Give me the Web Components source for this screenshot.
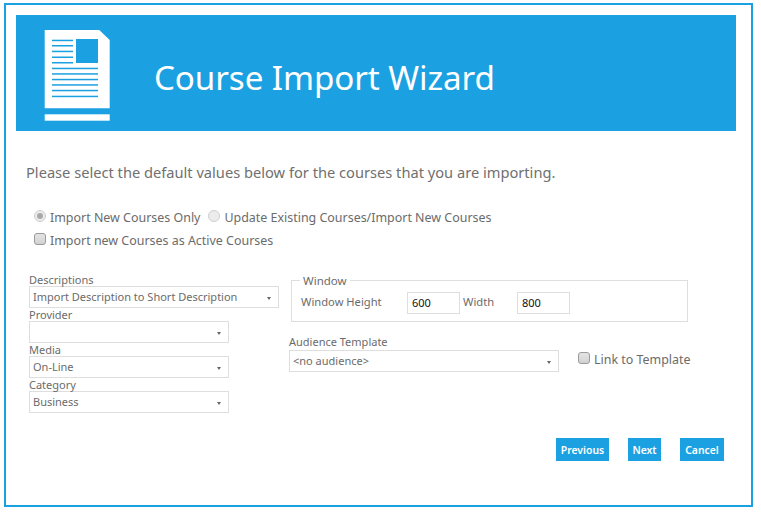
<!DOCTYPE html>
<html>
<head>
<meta charset="utf-8">
<title>Course Import Wizard</title>
<style>
  html, body { margin: 0; background: #fff; }
  body { font-family: "Noto Sans", "Open Sans", sans-serif; color: #6b6b6b; }
</style>
</head>
<body>
<course-wizard>Course Import Wizard</course-wizard>

<script>
class WizBanner extends HTMLElement {
  connectedCallback() {
    this.attachShadow({ mode: 'open' });
    this.shadowRoot.innerHTML = `
      <style>
        :host { display: flex; align-items: center; height: 116px; background: #1ba1e2; color: #fff; }
        svg { display: block; align-self: flex-start; margin: 15px 0 0 28px; flex: none; }
        h1 { margin: 10px 0 0 43px; font: 400 33.2px/40px "Noto Sans", sans-serif; letter-spacing: -0.1px; }
      </style>
      <svg width="67" height="91" viewBox="0 0 67 91">
        <path fill="#fff" d="M0.7 0H55.3L65.7 10V78.3H0.7Z"/>
        <rect x="0.7" y="84.3" width="65" height="6.4" fill="#fff"/>
        <rect x="32" y="9" width="22" height="24" fill="#1ba1e2"/>
        <g fill="#1ba1e2">
          <rect x="8" y="9.7" width="21" height="1.5"/>
          <rect x="8" y="15" width="21" height="1.5"/>
          <rect x="8" y="20.7" width="21" height="1.5"/>
          <rect x="8" y="26.5" width="21" height="1.5"/>
          <rect x="8" y="32" width="21" height="1.5"/>
          <rect x="8" y="37.7" width="46" height="1.5"/>
          <rect x="8" y="43.2" width="46" height="1.5"/>
          <rect x="8" y="48.8" width="46" height="1.5"/>
          <rect x="8" y="54.2" width="46" height="1.5"/>
          <rect x="8" y="59.8" width="46" height="1.5"/>
          <rect x="8" y="65.7" width="46" height="1.5"/>
        </g>
      </svg>
      <h1><slot></slot></h1>
    `;
  }
}
customElements.define('wiz-banner', WizBanner);

class WizOption extends HTMLElement {
  connectedCallback() {
    this.attachShadow({ mode: 'open' });
    const radio = this.getAttribute('type') === 'radio';
    const on = this.hasAttribute('checked');
    this.shadowRoot.innerHTML = `
      <style>
        :host { display: inline-flex; align-items: center; font-size: 12.45px; line-height: 18px; color: #6b6b6b; }
        i { flex: none; box-sizing: border-box; width: 12px; height: 12px; margin: -5px 4px 0 0; border: 1px solid #9a9a9a; border-radius: 3px; background: linear-gradient(#e4e4e4, #d2d2d2); }
        i.radio { border-radius: 50%; border-color: #cfcfcf; background: #ececec; display: flex; align-items: center; justify-content: center; }
        i.radio b { width: 6px; height: 6px; border-radius: 50%; background: #a8a8a8; }
      </style>
      <i class="${radio ? 'radio' : ''}">${radio && on ? '<b></b>' : ''}</i><span><slot></slot></span>
    `;
  }
}
customElements.define('wiz-option', WizOption);

class WizSelect extends HTMLElement {
  connectedCallback() {
    this.attachShadow({ mode: 'open' });
    const label = this.getAttribute('label');
    const width = this.getAttribute('width') || 200;
    this.shadowRoot.innerHTML = `
      <style>
        :host { display: block; font-size: 11px; color: #6b6b6b; }
        label { display: block; height: var(--label-height, 13px); line-height: 13px; }
        div { box-sizing: border-box; width: ${width}px; height: 22px; border: 1px solid #dedede; background: #fff; display: flex; align-items: center; justify-content: space-between; padding: 0 7px 0 3px; line-height: 20px; }
        u { width: 0; height: 0; border: 2.5px solid transparent; border-top: 3px solid #666; border-bottom: 0; margin-top: 2px; }
      </style>
      <label>${label}</label>
      <div><span><slot></slot></span><u></u></div>
    `;
  }
}
customElements.define('wiz-select', WizSelect);

class WizNumber extends HTMLElement {
  connectedCallback() {
    this.attachShadow({ mode: 'open' });
    this.shadowRoot.innerHTML = `
      <style>
        :host { display: block; box-sizing: border-box; width: 53px; height: 22px; border: 1px solid #dedede; padding: 1px 0 0 4px; font-size: 11px; line-height: 18px; color: #111; }
      </style>
      <slot></slot>
    `;
  }
}
customElements.define('wiz-number', WizNumber);

class WizWindowBox extends HTMLElement {
  connectedCallback() {
    this.attachShadow({ mode: 'open' });
    this.shadowRoot.innerHTML = `
      <style>
        :host { display: block; box-sizing: border-box; width: 397px; height: 42px; margin-left: 2px; border: 1px solid #dedede; position: relative; font-size: 11.2px; color: #6b6b6b; }
        .legend { position: absolute; left: 8px; top: -8px; padding: 0 3px; background: #fff; font-size: 11.5px; line-height: 15px; }
        .row { display: flex; align-items: flex-start; padding: 11px 0 0 9px; line-height: 16px; }
        .h { width: 106px; padding-top: 2px; }
        .w { width: 54px; margin-left: 3px; padding-top: 2px; }
      </style>
      <span class="legend">Window</span>
      <div class="row">
        <span class="h">Window Height</span>
        <wiz-number>${this.getAttribute('height')}</wiz-number>
        <span class="w">Width</span>
        <wiz-number>${this.getAttribute('width')}</wiz-number>
      </div>
    `;
  }
}
customElements.define('wiz-window-box', WizWindowBox);

class WizButton extends HTMLElement {
  connectedCallback() {
    this.attachShadow({ mode: 'open' });
    const width = this.getAttribute('width');
    this.shadowRoot.innerHTML = `
      <style>
        :host { display: block; box-sizing: border-box; width: ${width}px; height: 23px; background: #1ba1e2; color: #fff; font-size: 10.4px; font-weight: 600; line-height: 24px; text-align: center; }
      </style>
      <slot></slot>
    `;
  }
}
customElements.define('wiz-button', WizButton);

class CourseWizard extends HTMLElement {
  connectedCallback() {
    this.attachShadow({ mode: 'open' });
    this.shadowRoot.innerHTML = `
      <style>
        :host { display: block; box-sizing: border-box; width: 749px; height: 504px; margin: 3px 0 0 4px; border: 2px solid #1ba1e2; padding: 10px 15px 0 10px; color: #6b6b6b; }
        .intro { margin: 31px 0 0 10px; font-size: 14.65px; line-height: 20px; color: #707070; }
        .options { display: flex; flex-direction: column; gap: 5px; margin: 27px 0 0 18px; align-items: flex-start; }
        .radios { display: flex; gap: 8px; }
        .cols { display: flex; margin: 23px 0 0 13px; }
        .left { width: 260px; display: flex; flex-direction: column; }
        .right { padding-top: 7px; }
        .aud { display: flex; margin-top: 13px; --label-height: 15px; }
        .aud wiz-option { margin: 16px 0 0 19px; align-self: flex-start; }
        .buttons { display: flex; justify-content: flex-end; gap: 19px; margin: 25px 12px 0 0; }
      </style>
      <wiz-banner><slot></slot></wiz-banner>
      <p class="intro">Please select the default values below for the courses that you are importing.</p>
      <div class="options">
        <div class="radios">
          <wiz-option type="radio" checked>Import New Courses Only</wiz-option>
          <wiz-option type="radio">Update Existing Courses/Import New Courses</wiz-option>
        </div>
        <wiz-option>Import new Courses as Active Courses</wiz-option>
      </div>
      <div class="cols">
        <div class="left">
          <wiz-select label="Descriptions" width="250">Import Description to Short Description</wiz-select>
          <wiz-select label="Provider"></wiz-select>
          <wiz-select label="Media">On-Line</wiz-select>
          <wiz-select label="Category">Business</wiz-select>
        </div>
        <div class="right">
          <wiz-window-box height="600" width="800"></wiz-window-box>
          <div class="aud">
            <wiz-select label="Audience Template" width="270">&lt;no audience&gt;</wiz-select>
            <wiz-option>Link to Template</wiz-option>
          </div>
        </div>
      </div>
      <div class="buttons">
        <wiz-button width="53">Previous</wiz-button>
        <wiz-button width="33">Next</wiz-button>
        <wiz-button width="44">Cancel</wiz-button>
      </div>
    `;
  }
}
customElements.define('course-wizard', CourseWizard);
</script>
</body>
</html>
